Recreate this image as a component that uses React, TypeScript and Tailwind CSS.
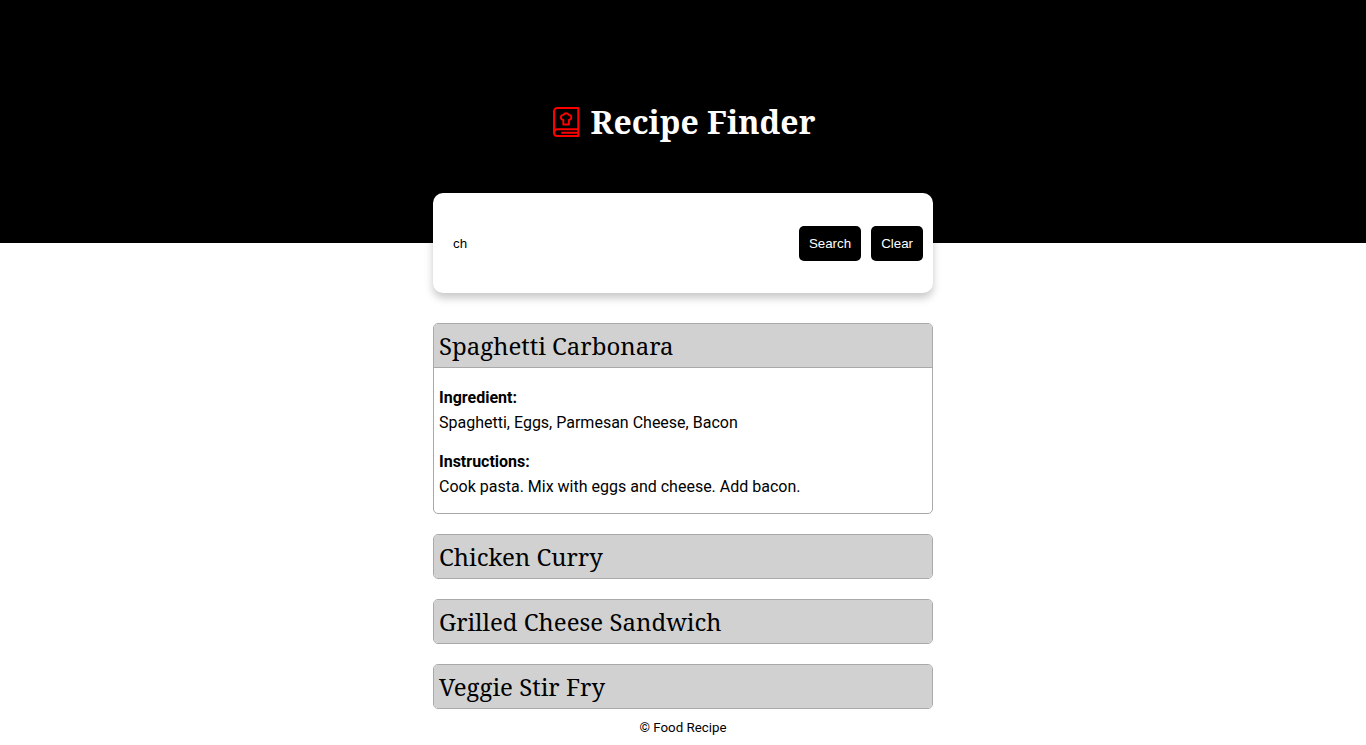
import { useState } from "react";

type Recipe = { title: string; ingredients: string; instructions: string };

const recipes: Recipe[] = [
  {
    title: "Spaghetti Carbonara",
    ingredients: "Spaghetti, Eggs, Parmesan Cheese, Bacon",
    instructions: "Cook pasta. Mix with eggs and cheese. Add bacon.",
  },
  { title: "Chicken Curry", ingredients: "Chicken, Curry", instructions: "Cook chicken. Add curry." },
  { title: "Grilled Cheese Sandwich", ingredients: "Bread, Cheese", instructions: "Grill bread with cheese." },
  { title: "Veggie Stir Fry", ingredients: "Vegetables", instructions: "Stir fry vegetables." },
];

function CookbookIcon() {
  return (
    <svg width="28" height="30" viewBox="0 0 28 30" fill="none" stroke="#ff0000" strokeWidth="2" strokeLinejoin="round" strokeLinecap="round">
      <path d="M25.300 22V1H4.500C2.600 1 1 2.600 1 4.500V25.500C1 27.500 2.500 29 4.500 29H25.300V22" />
      <path d="M1 25.500C1 23.500 2.500 22.200 4.500 22.200H25" />
      <path d="M9 25.700H25" />
      <path strokeWidth="1.900" d="M10.300 17.500V12.900C8.800 12.700 7.900 11.600 7.900 10.200C7.900 8.700 9.100 7.700 10.500 7.900C11.100 6.700 12 6.200 13.100 6.200C14.200 6.200 15.100 6.700 15.700 7.900C17.100 7.700 18.300 8.700 18.300 10.200C18.300 11.600 17.400 12.700 15.900 12.900V17.500Z" />
    </svg>
  );
}

export default function App() {
  const [query, setQuery] = useState("ch");
  const [open, setOpen] = useState(0);
  return (
    <div className="h-[745px] overflow-hidden bg-white font-['Roboto',sans-serif] text-base leading-[25px] text-black">
      <header className="flex h-[243px] justify-center bg-black pl-[2px] pt-[98px]">
        <h1 className="flex h-12 items-center gap-[10px] font-['Noto_Serif','Droid_Serif',serif] text-[32px] font-bold leading-[48px] text-white">
          <CookbookIcon />
          Recipe Finder
        </h1>
      </header>
      <main className="mx-auto w-[500px]">
        <form
          className="-mt-[50px] flex h-[100px] items-center gap-[10px] rounded-[10px] bg-white p-[10px] font-['Liberation_Sans',Arial,sans-serif] shadow-[0_5px_8px_rgba(0,0,0,0.22)]"
          onSubmit={(e) => e.preventDefault()}
        >
          <input
            className="h-[35px] min-w-0 flex-1 px-[10px] text-[13.333px] outline-none"
            value={query}
            onChange={(e) => setQuery(e.target.value)}
          />
          <button className="h-[35px] rounded-[5px] bg-black px-[10px] text-[13.333px] leading-[15px] text-white">Search</button>
          <button type="button" onClick={() => setQuery("")} className="h-[35px] rounded-[5px] bg-black px-[10px] text-[13.333px] leading-[15px] text-white">
            Clear
          </button>
        </form>
        <div className="mt-[30px] flex flex-col gap-5">
          {recipes.map((r, i) => (
            <article key={r.title} className="overflow-hidden rounded-[5px] border border-[#a9a9a9]">
              <h2
                className="h-[43px] cursor-pointer bg-[#d1d1d1] px-[5px] font-['Noto_Serif','Droid_Serif',serif] text-2xl leading-[44px]"
                onClick={() => setOpen(open === i ? -1 : i)}
              >
                {r.title}
              </h2>
              {open === i && (
                <div className="flex flex-col gap-[14px] border-t border-[#a9a9a9] px-[5px] pb-[14px] pt-[17px]">
                  <p>
                    <strong className="font-bold">Ingredient:</strong>
                    <br />
                    {r.ingredients}
                  </p>
                  <p>
                    <strong className="font-bold">Instructions:</strong>
                    <br />
                    {r.instructions}
                  </p>
                </div>
              )}
            </article>
          ))}
        </div>
      </main>
      <footer className="pt-[6px] text-center text-[13.333px] leading-[25px]">© Food Recipe</footer>
    </div>
  );
}
